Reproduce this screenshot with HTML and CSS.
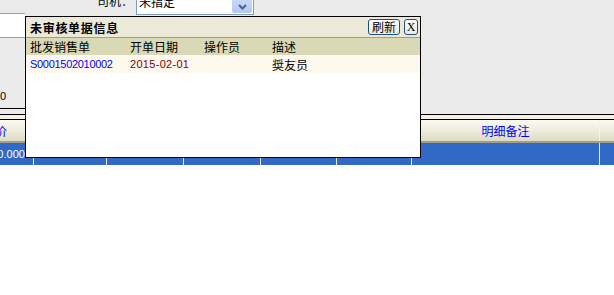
FILE: index.html
```
<!DOCTYPE html>
<html lang="zh-CN">
<head>
  <meta charset="UTF-8">
  <title>未审核单据信息</title>
  <link rel="stylesheet" href="styles.css">
</head>
<body>

<div class="panel">
  <div class="filters">
    <div class="code-box"></div>
    <label class="driver">司机：</label>
    <div class="select">
      <span class="select-text">未指定</span>
      <span class="drop">
        <svg width="9" height="6" viewBox="0 0 9 6"><path d="M1 1 L4.5 4.5 L8 1" fill="none" stroke="#4d6185" stroke-width="2"/></svg>
      </span>
    </div>
  </div>
  <div class="summary"><span class="num">0</span></div>
</div>

<div class="grid-strip"></div>
<div class="grid-head">
  <div class="cell first">单价</div>
  <div class="cell"></div>
  <div class="cell"></div>
  <div class="cell"></div>
  <div class="cell"></div>
  <div class="cell"></div>
  <div class="cell center">明细备注</div>
  <div class="cell"></div>
</div>
<div class="grid-row selected">
  <div class="cell first"><span class="num">0.0000</span></div>
  <div class="cell"></div>
  <div class="cell"></div>
  <div class="cell"></div>
  <div class="cell"></div>
  <div class="cell"></div>
  <div class="cell"></div>
  <div class="cell"></div>
</div>

<!-- floating window -->
<div class="popup">
  <div class="popup-title">
    <span class="title-text">未审核单据信息</span>
    <button class="btn">刷新</button>
    <button class="btn btn-x">X</button>
  </div>
  <div class="list-row list-head">
    <span>批发销售单</span>
    <span>开单日期</span>
    <span>操作员</span>
    <span>描述</span>
  </div>
  <div class="list-row list-item">
    <span class="num bill">S0001502010002</span>
    <span class="num date">2015-02-01</span>
    <span></span>
    <span>奨友员</span>
  </div>
</div>

</body>
</html>
```

FILE: styles.css
```
body {
  margin: 0;
  background: #fff;
  font-family: "Liberation Sans", "Noto Sans CJK SC", sans-serif;
  font-size: 12px;
  color: #000;
  overflow: hidden;
}

.num {
  font-family: "Liberation Sans", sans-serif;
  font-size: 11px;
}

/* top form area */
.panel {
  background: #ebebeb;
  height: 114px;
  border-bottom: 1px solid #000;
}

.filters {
  display: flex;
  align-items: flex-start;
  height: 38px;
}

.code-box {
  width: 25px;
  height: 25px;
  margin-top: 13px;
  box-sizing: border-box;
  background: #fff;
  border-top: 1px solid #8fa3b8;
  border-bottom: 1px solid #8fa3b8;
}

.driver {
  margin-left: 72px;
  margin-top: -5px;
  line-height: 14px;
}

.select {
  display: flex;
  align-items: flex-start;
  margin-left: 3px;
  margin-top: -7px;
  width: 118px;
  height: 22px;
  box-sizing: border-box;
  background: #fff;
  border: 1px solid #7f9db9;
}

.select-text {
  flex: 1;
  padding-left: 2px;
  line-height: 14px;
  margin-top: 2px;
}

.drop {
  display: flex;
  align-items: center;
  justify-content: center;
  width: 20px;
  height: 13px;
  margin: 6px 1px 0 0;
  border-radius: 0 0 2px 2px;
  background: linear-gradient(#c8d8fb, #b2c7f5);
}

.summary {
  width: 25px;
  height: 71px;
  box-sizing: border-box;
  padding-top: 51px;
  border-bottom: 1px solid #000;
  line-height: 14px;
}

/* grid behind the window */
.grid-strip {
  height: 4px;
  background: #f4f1e4;
  border-bottom: 1px solid #000;
}

.grid-head,
.grid-row {
  display: grid;
  grid-template-columns: 33px 73px 77px 77px 76px 75px 188px 1fr;
}

.grid-head {
  height: 21px;
  background: linear-gradient(#fafaf3, #ecebdb 55%, #dcdbc2);
  border-bottom: 2px solid #a19e8b;
  color: #0000ff;
}

.grid-head .cell {
  display: flex;
  align-items: center;
  border-left: 1px solid #f2f2ea;
  white-space: nowrap;
}

.grid-head .cell.first {
  border-left: none;
  justify-content: flex-end;
  padding-right: 26px;
}

.grid-head .cell.center {
  justify-content: center;
}

.grid-row {
  height: 22px;
}

.grid-row.selected {
  background: #316ac5;
  color: #fff;
}

.grid-row .cell {
  display: flex;
  align-items: center;
  border-left: 1px solid #e4ecf7;
  white-space: nowrap;
}

.grid-row .cell.first {
  border-left: none;
  justify-content: flex-end;
  padding-right: 2px;
}

/* floating window */
.popup {
  position: absolute;
  left: 25px;
  top: 16px;
  width: 396px;
  height: 142px;
  box-sizing: border-box;
  background: #fff;
  border: 1px solid #000;
}

.popup-title {
  display: flex;
  align-items: center;
  height: 20px;
  padding: 0 2px 0 4px;
  background: #ece9d8;
  border-bottom: 1px solid #9d9c96;
}

.title-text {
  flex: 1;
  font-weight: bold;
  letter-spacing: 0.7px;
}

.btn {
  height: 16px;
  padding: 0 3px;
  margin-left: 4px;
  font-family: "Noto Sans CJK SC", sans-serif;
  font-size: 12px;
  line-height: 14px;
  color: #000;
  background: linear-gradient(#ffffff, #ecebe4);
  border: 1px solid #1c5180;
  border-radius: 3px;
}

.btn-x {
  width: 14px;
  padding: 0;
  font-family: "Liberation Serif", serif;
  font-size: 12px;
}

.list-row {
  display: grid;
  grid-template-columns: 100px 74px 68px 1fr;
  height: 17px;
  align-items: center;
}

.list-row span {
  padding-left: 4px;
  white-space: nowrap;
}

.list-head {
  background: #d9d9b5;
}

.list-item {
  height: 18px;
  background: #fdf9ee;
}

.bill {
  color: #0000ff;
  letter-spacing: -0.3px;
}

.date {
  color: #800000;
  letter-spacing: 0.3px;
}
```
